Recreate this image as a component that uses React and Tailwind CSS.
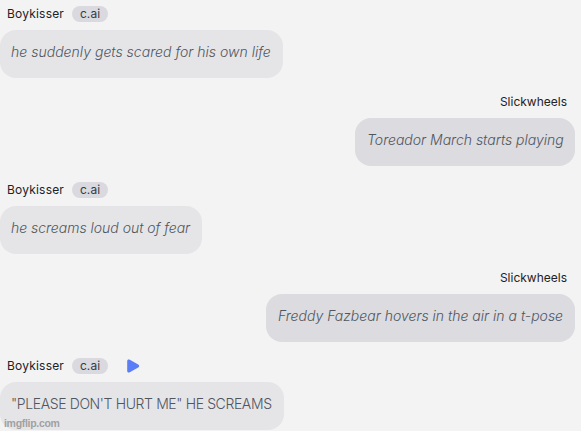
const messages = [
  { name: 'Boykisser', text: 'he suddenly gets scared for his own life', bubble: 'w-[283px]', track: 'tracking-[0.02px]' },
  { name: 'Slickwheels', mine: true, text: 'Toreador March starts playing', bubble: 'w-[220px]', track: 'tracking-[0px]' },
  { name: 'Boykisser', text: 'he screams loud out of fear', bubble: 'w-[202px]', track: 'tracking-[-0.02px]' },
  { name: 'Slickwheels', mine: true, text: 'Freddy Fazbear hovers in the air in a t-pose', bubble: 'w-[309px]', track: 'tracking-[0px]' },
  { name: 'Boykisser', play: true, plain: true, text: '"PLEASE DON\'T HURT ME" HE SCREAMS', bubble: 'w-[284px]', track: 'tracking-[-0.38px]' },
];

function PlayIcon() {
  return (
    <svg width="13" height="14" viewBox="0 0 13 14" className="ml-[19px] shrink-0" fill="#5b7df5">
      <path d="M0.2 2.3C0.2 0.6 1.4 0 2.8 0.8L11.2 5.5C12.6 6.4 12.6 7.6 11.2 8.5L2.8 13.2C1.4 14 0.2 13.4 0.2 11.8Z" />
    </svg>
  );
}

function Message({ m }) {
  return (
    <div className={`flex h-[88px] shrink-0 flex-col ${m.mine ? 'items-end pr-[6px]' : 'items-start'}`}>
      <div className={`flex h-[30px] shrink-0 items-center pb-[2px] text-[12px] leading-4 text-[#222225] ${m.mine ? 'pr-[8px]' : 'pl-[7px]'}`}>
        <span className={`whitespace-nowrap ${m.mine ? 'tracking-[0px]' : 'tracking-[0.2px]'}`}>{m.name}</span>
        {!m.mine && (
          <span className="ml-[8px] flex h-4 w-9 items-center justify-center rounded-full bg-[#d9d9df] tracking-[0.1px] text-[#3a3a42]">c.ai</span>
        )}
        {m.play && <PlayIcon />}
      </div>
      <div className={`flex h-12 shrink-0 items-center rounded-2xl pb-[5px] ${m.bubble} ${m.mine ? 'bg-[#dbdbe0] pl-[12px]' : 'bg-[#e5e5e8] pl-[11px]'}`}>
        <span className={`whitespace-nowrap text-[14px] font-light text-[#50565f] ${m.plain ? '' : 'italic'} ${m.track}`}>{m.text}</span>
      </div>
    </div>
  );
}

export default function App() {
  return (
    <div className="relative h-[431px] w-[581px] overflow-hidden bg-[#f3f3f3] font-['Inter','Liberation_Sans',sans-serif]">
      <div className="flex flex-col">
        {messages.map((m, i) => <Message key={i} m={m} />)}
      </div>
      <span className="absolute bottom-0 left-[4px] font-['Liberation_Sans',sans-serif] text-[10.5px] leading-4 font-bold tracking-[-0.3px] text-[#a0a0a2]">imgflip.com</span>
    </div>
  );
}
